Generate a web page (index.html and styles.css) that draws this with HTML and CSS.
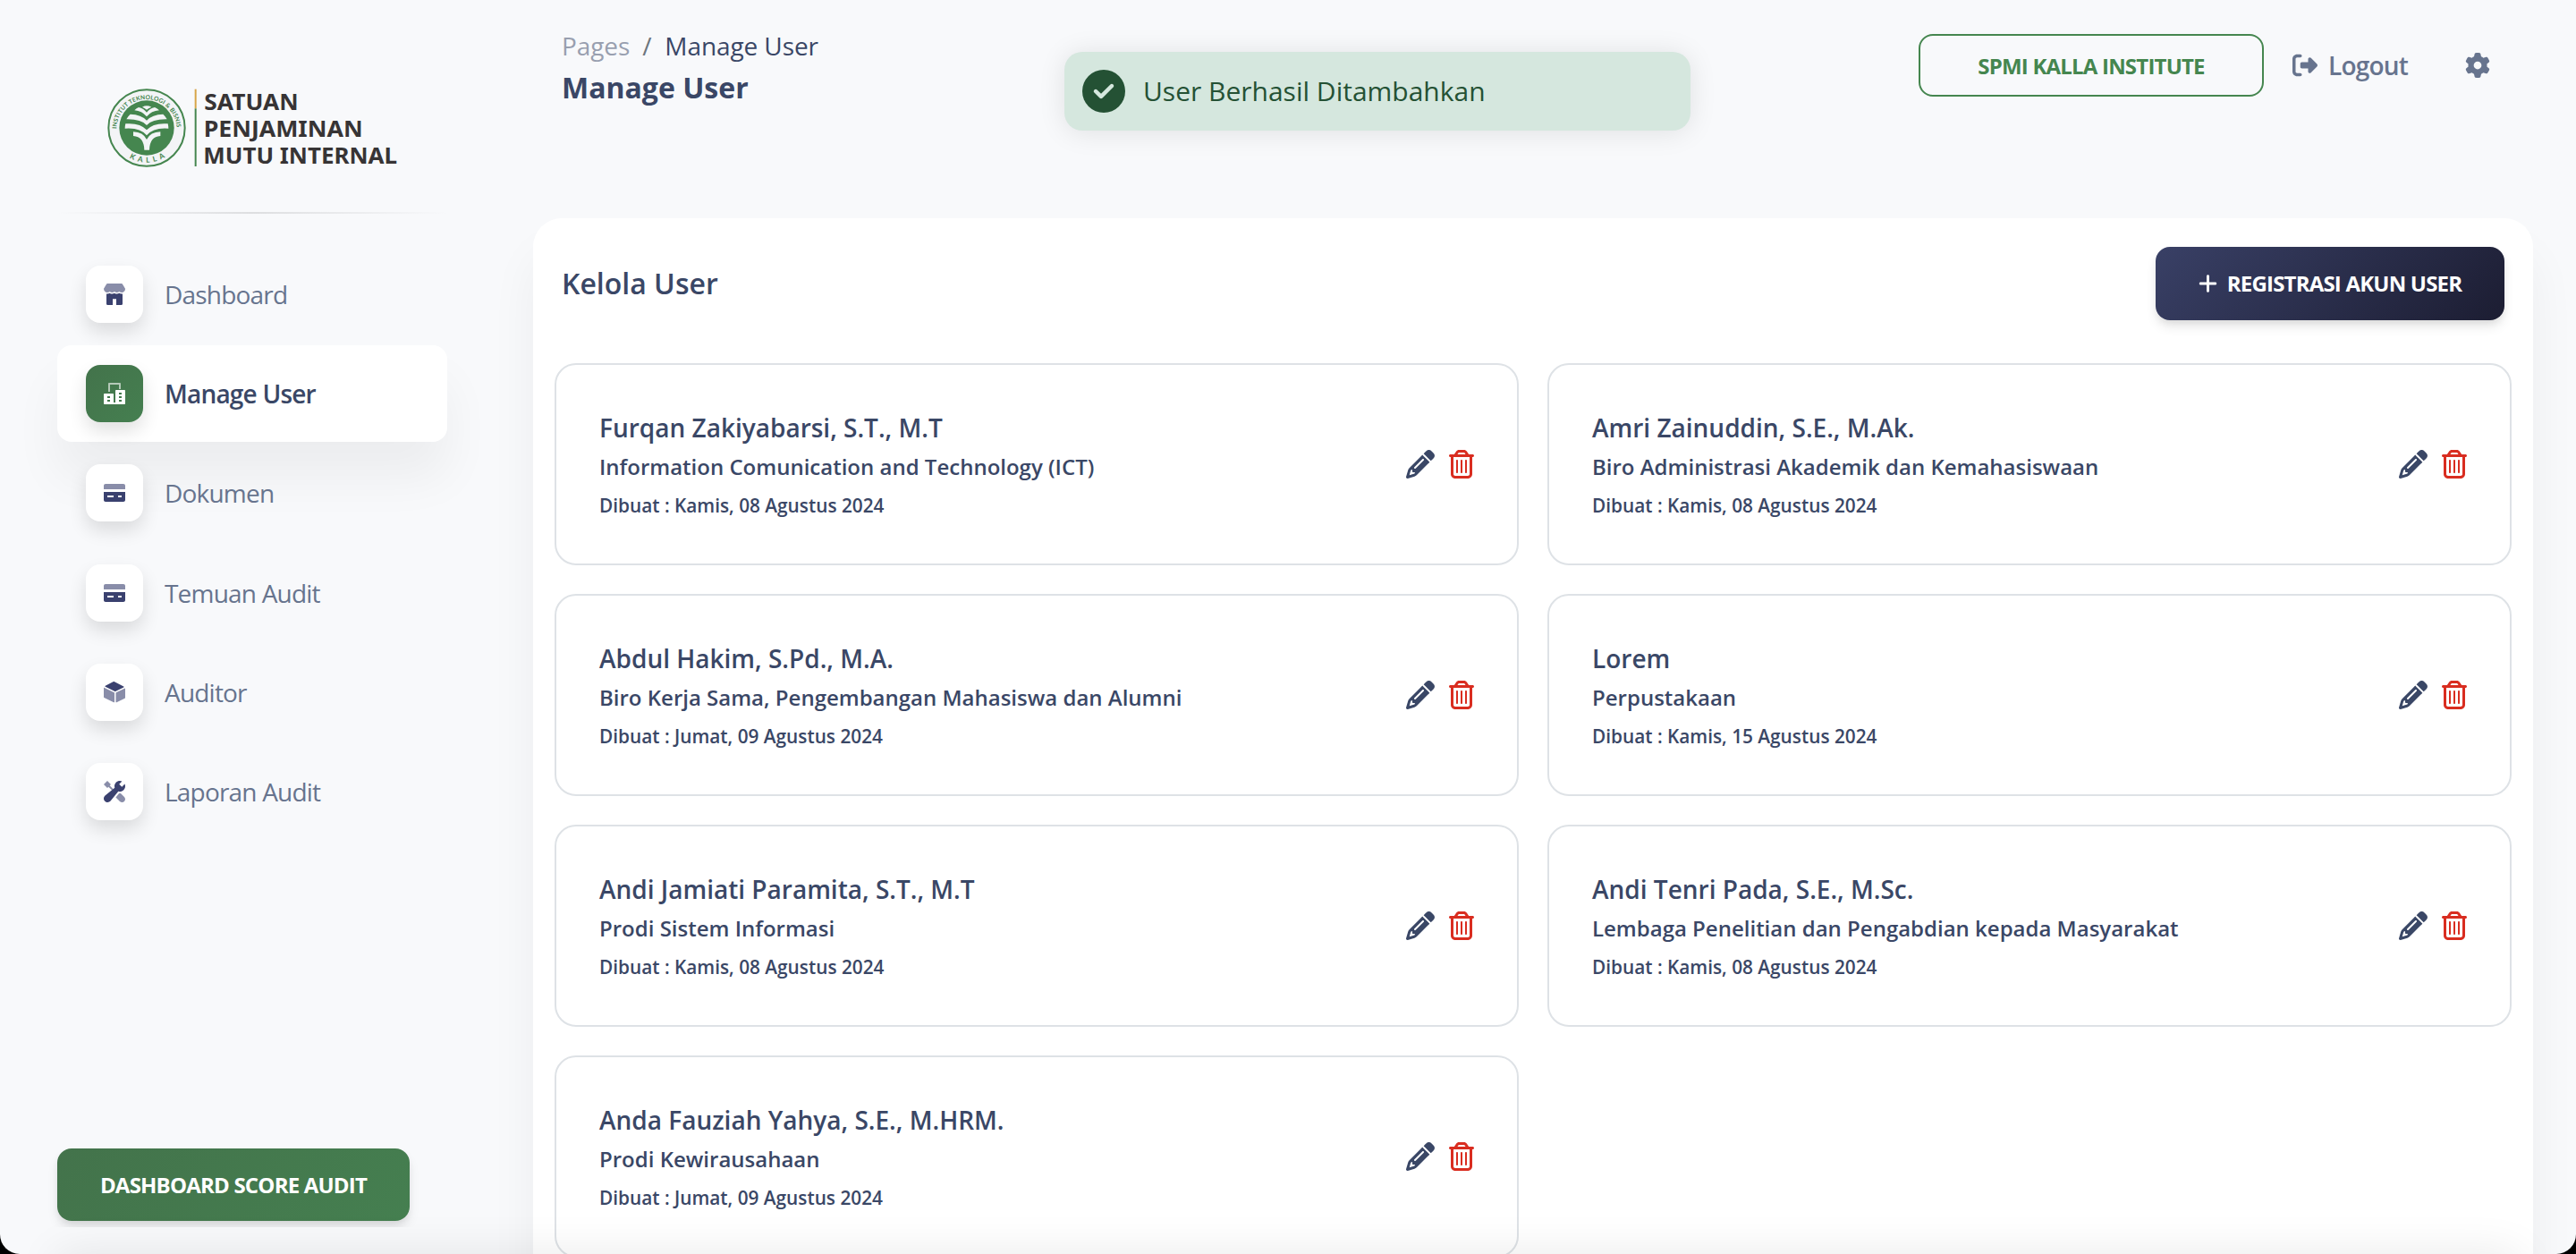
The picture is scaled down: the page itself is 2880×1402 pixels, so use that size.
FILE: index.html
```html
<!DOCTYPE html>
<html lang="id">
<head>
<meta charset="utf-8">
<title>Manage User</title>
<link rel="stylesheet" href="styles.css">
</head>
<body>
<svg class="defs" aria-hidden="true">
  <symbol id="pencil" viewBox="0 0 512 512"><path d="M410.3 231l11.3-11.3-33.9-33.9-62.1-62.1L291.7 89.8l-11.3 11.3-22.6 22.6L58.6 322.9c-10.4 10.4-18 23.3-22.2 37.4L1 480.7c-2.5 8.4-.2 17.5 6.1 23.7s15.3 8.5 23.7 6.1l120.3-35.4c14.1-4.2 27-11.8 37.4-22.2L387.7 253.7 410.3 231zM160 399.4l-9.1 22.7c-4 3.1-8.5 5.4-13.3 6.9L59.4 452l23-78.1c1.4-4.9 3.8-9.4 6.9-13.3l22.7-9.1v32c0 8.8 7.2 16 16 16h32zM362.7 18.7L348.3 33.2 325.7 55.8 314.3 67.1l33.9 33.9 62.1 62.1 33.9 33.9 11.3-11.3 22.6-22.6 14.5-14.5c25-25 25-65.5 0-90.5L453.3 18.7c-25-25-65.5-25-90.5 0zm-47.4 168l-144 144c-6.2 6.2-16.4 6.2-22.6 0s-6.2-16.4 0-22.6l144-144c6.2-6.2 16.4-6.2 22.6 0s6.2 16.4 0 22.6z"/></symbol>
  <symbol id="trash" viewBox="0 0 448 512"><path d="M170.5 51.6L151.5 80h145l-19-28.4c-1.5-2.2-4-3.6-6.7-3.6H177.1c-2.7 0-5.2 1.3-6.7 3.6zm147-26.6L354.2 80H368h48 8c13.3 0 24 10.7 24 24s-10.7 24-24 24h-8V432c0 44.2-35.8 80-80 80H112c-44.2 0-80-35.8-80-80V128H24c-13.3 0-24-10.7-24-24S10.7 80 24 80h8H80 93.8l36.7-55.1C140.9 9.4 158.4 0 177.1 0h93.7c18.7 0 36.2 9.4 46.6 24.9zM80 128V432c0 17.7 14.3 32 32 32H336c17.7 0 32-14.3 32-32V128H80zm80 64V400c0 8.8-7.2 16-16 16s-16-7.2-16-16V192c0-8.8 7.2-16 16-16s16 7.2 16 16zm80 0V400c0 8.8-7.2 16-16 16s-16-7.2-16-16V192c0-8.8 7.2-16 16-16s16 7.2 16 16zm80 0V400c0 8.8-7.2 16-16 16s-16-7.2-16-16V192c0-8.8 7.2-16 16-16s16 7.2 16 16z"/></symbol>
  <symbol id="card-icon" viewBox="0 0 43 36"><path opacity=".6" d="M43,10.748 L43,3.583 C43,1.604 41.396,0 39.417,0 L3.583,0 C1.604,0 0,1.604 0,3.583 L0,10.748 Z"/><path fill-rule="evenodd" d="M0,16.125 L0,32.25 C0,34.23 1.604,35.833 3.583,35.833 L39.417,35.833 C41.396,35.833 43,34.23 43,32.25 L43,16.125 Z M19.708,26.875 L7.167,26.875 L7.167,23.292 L19.708,23.292 Z M35.833,26.875 L28.667,26.875 L28.667,23.292 L35.833,23.292 Z"/></symbol>
</svg>
<div class="app">
  <aside class="sidebar">
    <svg class="brand" viewBox="240 114 975 270" role="img" aria-label="Satuan Penjaminan Mutu Internal">
      <defs>
        <path id="arc-top" d="M271 254 A101 101 0 0 1 473 254"/>
        <path id="arc-bottom" d="M256 249 A116 116 0 0 0 488 249"/>
      </defs>
      <circle cx="372" cy="249" r="128" class="seal-ring"/>
      <circle cx="372" cy="249" r="92" class="seal-core"/>
      <text class="seal-text"><textPath href="#arc-top" startOffset="2" textLength="308">INSTITUT TEKNOLOGI &amp; BISNIS</textPath></text>
      <text class="seal-text seal-name"><textPath href="#arc-bottom" startOffset="121" textLength="126">KALLA</textPath></text>
      <g class="seal-leaves">
        <path d="M357 179 Q372 171 388 179 Q379 182 372 188 Q365 182 357 179Z"/>
        <path d="M331 190 Q338 183 345 180 Q362 184 372 197 Q382 184 399 180 Q406 183 414 190 Q388 192 372 211 Q356 192 331 190Z"/>
        <path d="M304 220 Q309 210 317 203 Q354 204 372 224 Q390 204 427 203 Q435 210 440 220 Q391 219 372 240 Q353 219 304 220Z"/>
        <path d="M299 251 Q299 243 301 235 Q350 231 372 256 Q394 231 443 235 Q445 243 445 251 Q394 247 372 274 Q350 247 299 251Z"/>
        <path d="M327 276 L327 262 Q360 263 372 288 Q384 263 418 262 L418 276 Q382 278 381 323 L364 323 Q363 278 327 276Z"/>
      </g>
      <path d="M536 119V184" class="rule-gold"/>
      <path d="M536 184V378" class="rule-green"/>
      <g class="brand-text">
        <text x="565" y="190" textLength="316" lengthAdjust="spacingAndGlyphs">SATUAN</text>
        <text x="563" y="279" textLength="534" lengthAdjust="spacingAndGlyphs">PENJAMINAN</text>
        <text x="562" y="369" textLength="650" lengthAdjust="spacingAndGlyphs">MUTU INTERNAL</text>
      </g>
    </svg>
    <hr class="divider">
    <nav class="menu">
      <a class="item"><span class="tile"><svg viewBox="0 0 47 47"><path opacity=".6" d="M46.72,10.741 L40.845,.95 C40.491,.361 39.854,0 39.167,0 L7.833,0 C7.146,0 6.509,.361 6.155,.95 L.28,10.741 C.097,11.046 0,11.395 0,11.75 C-.008,16.066 3.484,19.573 7.8,19.583 L7.816,19.583 C9.75,19.588 11.617,18.873 13.052,17.576 C16.017,20.256 20.529,20.256 23.494,17.576 C26.46,20.262 30.979,20.262 33.946,17.576 C36.242,19.648 39.544,20.171 42.368,18.91 C45.193,17.65 47.008,14.843 47,11.75 C47,11.395 46.903,11.046 46.72,10.741 Z"/><path d="M39.198,22.491 C37.378,22.493 35.582,22.015 33.952,21.095 L33.922,21.111 C31.143,22.684 27.926,22.932 24.984,21.8 C24.475,21.605 23.978,21.372 23.496,21.102 L23.475,21.113 C20.696,22.687 17.479,22.934 14.539,21.8 C14.03,21.605 13.533,21.372 13.052,21.102 C11.425,22.019 9.632,22.495 7.816,22.491 C7.165,22.484 6.516,22.417 5.875,22.291 L5.875,44.722 C5.875,45.95 6.752,46.945 7.833,46.945 L19.583,46.945 L19.583,33.607 L27.417,33.607 L27.417,46.945 L39.167,46.945 C40.248,46.945 41.125,45.95 41.125,44.722 L41.125,22.282 C40.489,22.412 39.844,22.482 39.198,22.491 Z"/></svg></span>Dashboard</a>
      <a class="item active"><span class="tile"><svg viewBox="0 0 42 42"><path opacity=".6" d="M12.25,17.5 L8.75,17.5 L8.75,1.75 C8.75,.782 9.532,0 10.5,0 L31.5,0 C32.468,0 33.25,.782 33.25,1.75 L33.25,12.25 L29.75,12.25 L29.75,3.5 L12.25,3.5 Z"/><path fill-rule="evenodd" d="M40.25,14 L24.5,14 C23.532,14 22.75,14.782 22.75,15.75 L22.75,38.5 L19.25,38.5 L19.25,22.75 C19.25,21.782 18.468,21 17.5,21 L1.75,21 C.782,21 0,21.782 0,22.75 L0,40.25 C0,41.218 .782,42 1.75,42 L40.25,42 C41.218,42 42,41.218 42,40.25 L42,15.75 C42,14.782 41.218,14 40.25,14 Z M12.25,36.75 H7 V33.25 H12.25 Z M12.25,29.75 H7 V26.25 H12.25 Z M35,36.75 H29.75 V33.25 H35 Z M35,29.75 H29.75 V26.25 H35 Z M35,22.75 H29.75 V19.25 H35 Z"/></svg></span>Manage User</a>
      <a class="item"><span class="tile"><svg><use href="#card-icon"/></svg></span>Dokumen</a>
      <a class="item"><span class="tile"><svg><use href="#card-icon"/></svg></span>Temuan Audit</a>
      <a class="item"><span class="tile"><svg viewBox="0 0 42 42"><path d="M22.76,19.309 L38.899,11.24 C39.393,10.993 39.593,10.392 39.346,9.898 C39.249,9.704 39.092,9.547 38.899,9.451 L20.274,.138 C19.905,-.047 19.47,-.047 19.1,.138 L3.101,8.138 C2.607,8.385 2.407,8.986 2.654,9.48 C2.751,9.673 2.908,9.83 3.101,9.927 L21.865,19.309 C22.147,19.45 22.478,19.45 22.76,19.309 Z"/><path opacity=".6" d="M23.625,22.429 L23.625,39.881 C23.625,40.433 24.073,40.881 24.625,40.881 C24.78,40.881 24.933,40.844 25.072,40.775 L41.274,32.673 C41.719,32.452 42,31.997 42,31.5 L42,14.242 C42,13.689 41.552,13.242 41,13.242 C40.845,13.242 40.692,13.278 40.553,13.347 L24.178,21.535 C23.839,21.704 23.625,22.05 23.625,22.429 Z M20.447,21.535 L1.447,12.035 C.953,11.788 .353,11.988 .106,12.482 C.036,12.621 0,12.774 0,12.929 L0,30.188 C0,30.685 .281,31.139 .726,31.362 L19.553,40.775 C20.047,41.022 20.647,40.822 20.894,40.328 C20.964,40.189 21,40.036 21,39.881 L21,22.429 C21,22.05 20.786,21.704 20.447,21.535 Z"/></svg></span>Auditor</a>
      <a class="item"><span class="tile"><svg viewBox="0 0 40 40"><path opacity=".6" d="M18.088 15.732 11.178 8.822 13.333 6.667 6.667 0 0 6.667 6.667 13.333 8.822 11.178 15.315 17.672Z M31.567,23.233 C31.052,23.293 30.53,23.333 30,23.333 C29.492,23.333 28.987,23.303 28.48,23.245 L22.412,30.743 L29.942,38.273 C32.243,40.575 35.973,40.575 38.275,38.273 C40.577,35.972 40.577,32.242 38.275,29.94 Z"/><path d="M33.785,11.285 L28.715,6.215 L34.062,.868 C32.82,.315 31.448,0 30,0 C24.477,0 20,4.477 20,10 C20,10.99 20.148,11.943 20.417,12.847 L2.435,27.397 C.95,28.708 .063,30.595 .003,32.573 C-.058,34.553 .71,36.492 2.11,37.89 C3.47,39.252 5.278,40 7.202,40 C9.267,40 11.237,39.113 12.603,37.565 L27.153,19.583 C28.057,19.852 29.01,20 30,20 C35.523,20 40,15.523 40,10 C40,8.552 39.685,7.18 39.132,5.937 Z"/></svg></span>Laporan Audit</a>
    </nav>
    <div class="sidebar-foot"><a class="btn btn-green">DASHBOARD SCORE AUDIT</a></div>
  </aside>

  <main class="main">
    <header class="topbar">
      <div class="heading">
        <div class="crumbs"><span class="crumb-root">Pages</span><span class="crumb-sep">/</span><span>Manage User</span></div>
        <h1>Manage User</h1>
      </div>
      <div class="account">
        <a class="btn btn-outline">SPMI KALLA INSTITUTE</a>
        <a class="logout"><svg viewBox="0 0 512 512"><path d="M377.9 105.9L500.7 228.7c7.2 7.2 11.3 17.1 11.3 27.3s-4.1 20.1-11.3 27.3L377.9 406.1c-6.4 6.4-15 9.9-24 9.9c-18.7 0-33.9-15.2-33.9-33.9l0-62.1-128 0c-17.7 0-32-14.3-32-32l0-64c0-17.7 14.3-32 32-32l128 0 0-62.1c0-18.7 15.2-33.9 33.9-33.9c9 0 17.6 3.6 24 9.9zM160 96L96 96c-17.7 0-32 14.3-32 32l0 256c0 17.7 14.3 32 32 32l64 0c17.7 0 32 14.3 32 32s-14.3 32-32 32l-64 0c-53 0-96-43-96-96L0 128C0 75 43 32 96 32l64 0c17.7 0 32 14.3 32 32s-14.3 32-32 32z"/></svg>Logout</a>
        <svg class="gear" viewBox="0 0 512 512"><path d="M495.9 166.6c3.2 8.7 .5 18.4-6.4 24.6l-43.3 39.4c1.1 8.3 1.7 16.8 1.7 25.4s-.6 17.1-1.7 25.4l43.3 39.4c6.9 6.2 9.6 15.9 6.4 24.6c-4.4 11.9-9.7 23.3-15.8 34.3l-4.7 8.1c-6.6 11-14 21.4-22.1 31.2c-5.9 7.2-15.7 9.6-24.5 6.8l-55.7-17.7c-13.4 10.3-28.2 18.9-44 25.4l-12.5 57.1c-2 9.1-9 16.3-18.2 17.8c-13.8 2.3-28 3.5-42.5 3.5s-28.7-1.2-42.5-3.5c-9.2-1.5-16.2-8.7-18.2-17.8l-12.5-57.1c-15.8-6.5-30.6-15.1-44-25.4L83.1 425.9c-8.8 2.8-18.6 .3-24.5-6.8c-8.1-9.8-15.5-20.2-22.1-31.2l-4.7-8.1c-6.1-11-11.4-22.4-15.8-34.3c-3.2-8.7-.5-18.4 6.4-24.6l43.3-39.4C64.6 273.1 64 264.6 64 256s.6-17.1 1.7-25.4L22.4 191.2c-6.9-6.2-9.6-15.9-6.4-24.6c4.4-11.9 9.7-23.3 15.8-34.3l4.7-8.1c6.6-11 14-21.4 22.1-31.2c5.9-7.2 15.7-9.6 24.5-6.8l55.7 17.7c13.4-10.3 28.2-18.9 44-25.4l12.5-57.1c2-9.1 9-16.3 18.2-17.8C227.3 1.2 241.5 0 256 0s28.7 1.2 42.5 3.5c9.2 1.5 16.2 8.7 18.2 17.8l12.5 57.1c15.8 6.5 30.6 15.1 44 25.4l55.7-17.7c8.8-2.8 18.6-.3 24.5 6.8c8.1 9.8 15.5 20.2 22.1 31.2l4.7 8.1c6.1 11 11.4 22.4 15.8 34.3zM256 336a80 80 0 1 0 0-160 80 80 0 1 0 0 160z"/></svg>
      </div>
    </header>

    <section class="panel">
      <div class="panel-head">
        <h2>Kelola User</h2>
        <a class="btn btn-dark"><svg viewBox="0 0 448 512"><path d="M256 80c0-17.7-14.3-32-32-32s-32 14.3-32 32V224H48c-17.7 0-32 14.3-32 32s14.3 32 32 32H192V432c0 17.7 14.3 32 32 32s32-14.3 32-32V288H400c17.7 0 32-14.3 32-32s-14.3-32-32-32H256V80z"/></svg><span>REGISTRASI AKUN USER</span></a>
      </div>
      <div class="users">
        <article class="user"><div class="details"><h3>Furqan Zakiyabarsi, S.T., M.T</h3><p class="unit">Information Comunication and Technology (ICT)</p><p class="date">Dibuat : Kamis, 08 Agustus 2024</p></div><div class="actions"><svg class="edit"><use href="#pencil"/></svg><svg class="delete"><use href="#trash"/></svg></div></article>
        <article class="user"><div class="details"><h3>Amri Zainuddin, S.E., M.Ak.</h3><p class="unit">Biro Administrasi Akademik dan Kemahasiswaan</p><p class="date">Dibuat : Kamis, 08 Agustus 2024</p></div><div class="actions"><svg class="edit"><use href="#pencil"/></svg><svg class="delete"><use href="#trash"/></svg></div></article>
        <article class="user"><div class="details"><h3>Abdul Hakim, S.Pd., M.A.</h3><p class="unit">Biro Kerja Sama, Pengembangan Mahasiswa dan Alumni</p><p class="date">Dibuat : Jumat, 09 Agustus 2024</p></div><div class="actions"><svg class="edit"><use href="#pencil"/></svg><svg class="delete"><use href="#trash"/></svg></div></article>
        <article class="user"><div class="details"><h3>Lorem</h3><p class="unit">Perpustakaan</p><p class="date">Dibuat : Kamis, 15 Agustus 2024</p></div><div class="actions"><svg class="edit"><use href="#pencil"/></svg><svg class="delete"><use href="#trash"/></svg></div></article>
        <article class="user"><div class="details"><h3>Andi Jamiati Paramita, S.T., M.T</h3><p class="unit">Prodi Sistem Informasi</p><p class="date">Dibuat : Kamis, 08 Agustus 2024</p></div><div class="actions"><svg class="edit"><use href="#pencil"/></svg><svg class="delete"><use href="#trash"/></svg></div></article>
        <article class="user"><div class="details"><h3>Andi Tenri Pada, S.E., M.Sc.</h3><p class="unit">Lembaga Penelitian dan Pengabdian kepada Masyarakat</p><p class="date">Dibuat : Kamis, 08 Agustus 2024</p></div><div class="actions"><svg class="edit"><use href="#pencil"/></svg><svg class="delete"><use href="#trash"/></svg></div></article>
        <article class="user"><div class="details"><h3>Anda Fauziah Yahya, S.E., M.HRM.</h3><p class="unit">Prodi Kewirausahaan</p><p class="date">Dibuat : Jumat, 09 Agustus 2024</p></div><div class="actions"><svg class="edit"><use href="#pencil"/></svg><svg class="delete"><use href="#trash"/></svg></div></article>
      </div>
    </section>
  </main>

  <div class="toast" role="status">
    <svg viewBox="0 0 512 512"><circle cx="256" cy="256" r="256"/><path d="M369 209L241 337c-9.4 9.4-24.6 9.4-33.9 0l-64-64c-9.4-9.4-9.4-24.6 0-33.9s24.6-9.4 33.9 0l47 47L335 175c9.4-9.4 24.6-9.4 33.9 0s9.4 24.6 0 33.9z"/></svg>
    <span>User Berhasil Ditambahkan</span>
  </div>
  <div class="bottom-shade"></div>
</div>
</body>
</html>
```
FILE: styles.css
```css
* { box-sizing: border-box; }
body {
  margin: 0;
  background: #000;
  color: #3a4766;
  font-family: "Open Sans", "Noto Sans", sans-serif;
  overflow: hidden;
}
h1, h2, h3, p { margin: 0; }
.defs { display: none; }
.app {
  position: relative;
  display: flex;
  height: 1402px;
  overflow: hidden;
  background: #f8f9fb;
  border-radius: 0 0 22px 22px;
}

/* Sidebar */
.sidebar {
  flex: none;
  display: flex;
  flex-direction: column;
  width: 564px;
  padding: 98px 64px 30px;
}
.brand { width: 325px; height: 90px; margin-left: 56px; overflow: visible; }
.seal-ring { fill: #f3f4f6; stroke: #45864f; stroke-width: 6; }
.seal-core { fill: #45864f; }
.seal-text { fill: #45864f; font: 700 20px Lato, sans-serif; }
.seal-name { font-size: 25px; }
.seal-leaves { fill: #f3f4f6; }
.rule-gold, .rule-green { fill: none; stroke: #d7a548; stroke-width: 6; }
.rule-green { stroke: #45864f; }
.brand-text { fill: #373435; font: 700 76px "Noto Sans", sans-serif; }
.divider {
  width: 100%;
  height: 2px;
  margin: 49px 0 36px;
  border: 0;
  background: linear-gradient(90deg, transparent, #dddee0, transparent);
}
.menu { display: flex; flex-direction: column; gap: 4px; }
.item {
  display: flex;
  align-items: center;
  gap: 24px;
  width: 436px;
  height: 107.3px;
  padding: 0 32px;
  border-radius: 16px;
  color: #67748e;
  font-size: 28px;
  letter-spacing: -.8px;
}
.tile {
  display: grid;
  place-items: center;
  width: 64px;
  height: 64px;
  border-radius: 16px;
  background: #fff;
  box-shadow: 0 10px 20px rgba(0, 0, 0, .12);
}
.tile svg { width: 24px; height: 24px; fill: #3a416f; }
.active {
  background: #fff;
  color: #3a4766;
  font-weight: 600;
  box-shadow: 0 40px 54px rgba(0, 0, 0, .05);
}
.active .tile { background: linear-gradient(135deg, #43734b, #457f50); }
.active .tile svg { fill: #fff; }
.sidebar-foot {
  display: flex;
  height: 88px;
  margin: auto -20px 0;
  padding: 0 20px;
  overflow: hidden;
}

/* Buttons */
.btn {
  display: flex;
  align-items: center;
  justify-content: center;
  border-radius: 16px;
  font-size: 24px;
  font-weight: 700;
  letter-spacing: -.8px;
  white-space: nowrap;
}
.btn-green {
  width: 394px;
  height: 81px;
  color: #fff;
  background: linear-gradient(135deg, #43734b, #457f50);
  box-shadow: 0 8px 14px -2px rgba(0, 0, 0, .11), 0 4px 8px -2px rgba(0, 0, 0, .07);
}
.btn-outline {
  width: 386px;
  height: 70px;
  border: 2px solid #45864f;
  color: #45864f;
}
.btn-dark {
  gap: 11px;
  width: 390px;
  height: 82px;
  color: #fff;
  background: linear-gradient(135deg, #394066, #1c1d32);
  box-shadow: 0 8px 14px -2px rgba(0, 0, 0, .11), 0 4px 8px -2px rgba(0, 0, 0, .07);
}
.btn-dark svg { width: 21px; height: 24px; fill: #fff; }
.btn-dark span { padding-bottom: 2px; }

/* Main column */
.main { flex: 1; padding: 0 48px 0 32px; }
.topbar {
  display: flex;
  justify-content: space-between;
  height: 244px;
  padding: 32px 48px 0 32px;
}
.crumbs { display: flex; font-size: 28px; line-height: 38px; letter-spacing: -.1px; }
.crumb-root { opacity: .5; }
.crumb-sep { padding: 0 15px 0 14px; color: #6c757d; }
h1 { margin-top: 4px; font-size: 32px; font-weight: 700; line-height: 48px; }
.account { display: flex; align-items: center; height: 70px; margin-top: 6px; }
.logout {
  display: flex;
  align-items: center;
  gap: 12px;
  margin: 0 64px 0 32px;
  color: #67748e;
  font-size: 28px;
  font-weight: 600;
  letter-spacing: -.8px;
}
.logout svg, .gear { width: 28px; height: 28px; fill: #67748e; }

.panel {
  height: 1300px;
  padding: 32px 24px;
  border-radius: 32px;
  background: #fff;
  box-shadow: 0 40px 54px rgba(0, 0, 0, .05);
}
.panel-head {
  display: flex;
  align-items: center;
  justify-content: space-between;
  height: 82px;
  padding: 0 8px;
}
h2 { padding-bottom: 2px; font-size: 32px; font-weight: 600; }
.users {
  display: grid;
  grid-template-columns: 1078px 1078px;
  gap: 32px;
  margin-top: 48px;
}
.user {
  display: flex;
  align-items: center;
  justify-content: space-between;
  height: 226px;
  padding: 0 48px;
  border: 2px solid #dee2e6;
  border-radius: 24px;
}
.details { padding-top: 3px; }
h3 { font-size: 28px; font-weight: 600; line-height: 44px; }
.unit { font-size: 24px; font-weight: 600; line-height: 44px; }
.date { font-size: 20.8px; font-weight: 600; line-height: 42px; }
.actions { display: flex; gap: 16px; }
.edit { width: 32px; height: 32px; fill: #3a4766; }
.delete { width: 28px; height: 32px; fill: #d92d20; }

/* Overlays */
.toast {
  position: absolute;
  top: 58px;
  left: 1190px;
  display: flex;
  align-items: center;
  gap: 20px;
  width: 700px;
  height: 88px;
  padding: 0 20px;
  border-radius: 20px;
  background: #d5e7de;
  color: #245134;
  font-size: 30px;
  box-shadow: 0 2px 30px rgba(0, 0, 0, .1);
}
.toast svg { width: 48px; height: 48px; fill: #245134; }
.toast path { fill: #d5e7de; }
.toast span { padding-bottom: 2px; }
.bottom-shade {
  position: absolute;
  left: 64px;
  right: 64px;
  top: 1402px;
  height: 120px;
  box-shadow: 0 0 50px rgba(0, 0, 0, .09);
}
```
